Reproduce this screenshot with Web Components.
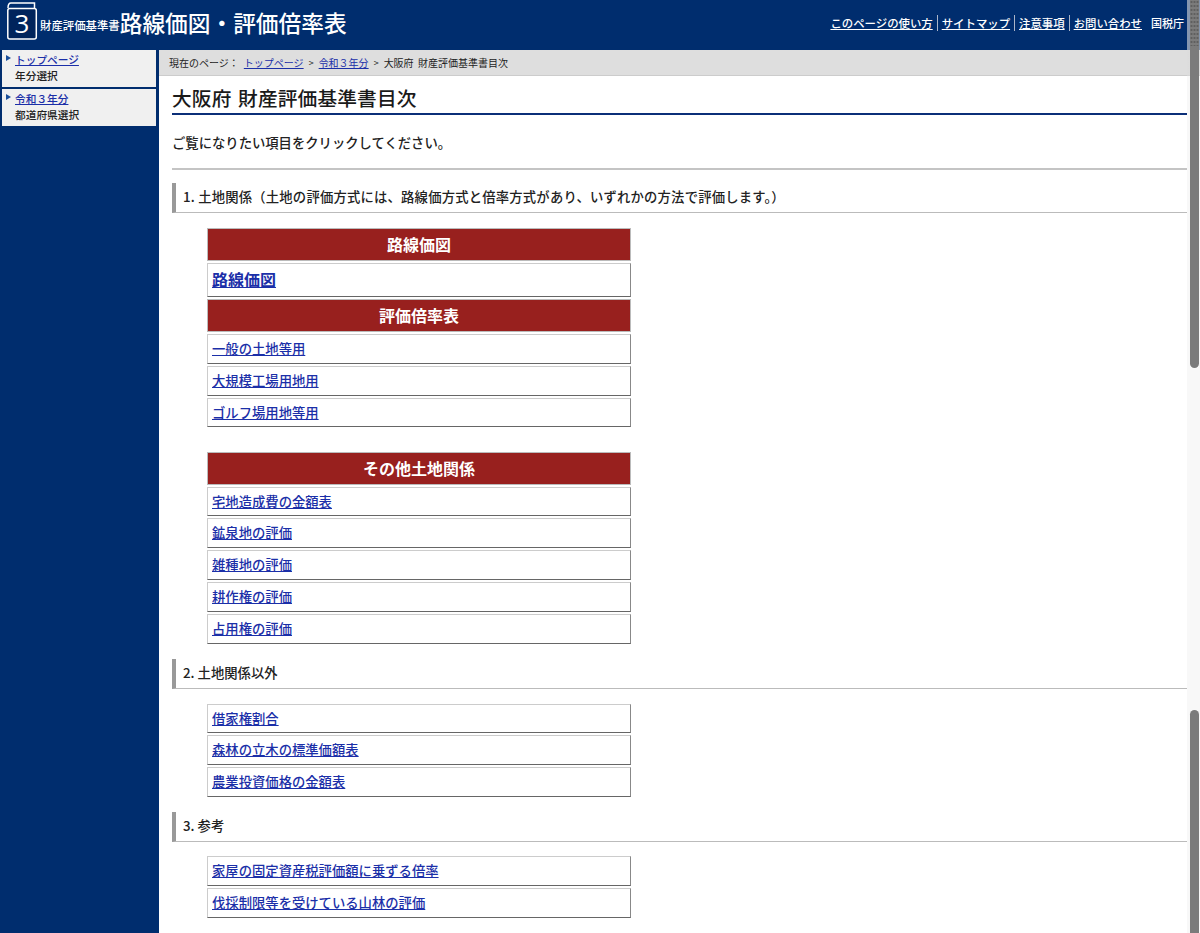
<!DOCTYPE html>
<html lang="ja"><head><meta charset="utf-8"><title>大阪府 財産評価基準書目次</title>
<style>
html,body{margin:0;padding:0;height:933px;overflow:hidden;background:#fff}
body{font-family:"Noto Sans CJK JP","Noto Sans",sans-serif;color:#222}
</style></head><body>
<app-page></app-page>
<script>
const FONT='"Noto Sans CJK JP","Liberation Sans",sans-serif';
function def(name,css,html){
  customElements.define(name,class extends HTMLElement{
    constructor(){super();const r=this.attachShadow({mode:'open'});r.innerHTML='<style>'+css+'</style>'+html;}
  });
}
def('site-header',`
:host{display:flex;align-items:flex-start;justify-content:space-between;height:50px;background:#002d6e;color:#fff;font-family:${FONT};box-sizing:border-box}
.l{display:flex;align-items:center;height:44px;padding-left:6px}
svg{display:block;margin-right:2px;flex:none}
.s{font-size:11.400px;font-weight:500;margin-top:5px;white-space:nowrap}
.t{font-size:22.700px;font-weight:500;white-space:nowrap}
nav{display:flex;align-items:center;font-size:11.400px;font-weight:500;height:16px;margin:15px 16px 0 0;white-space:nowrap}
a{color:#fff;padding:0 4px 0 4px;border-left:1px solid #aab4c8;line-height:16px}
a:first-child{border-left:0}
span{padding-left:5px;font-size:11px}
`,`<div class="l"><svg width="32" height="40" viewBox="0 0 32 40"><path d="M2 6Q2 1 5 1H28.500V6" fill="none" stroke="#fff" stroke-width="1.500"/><rect x="1.800" y="6.500" width="28.500" height="30.500" rx="2" fill="#00245c" stroke="#fff" stroke-width="1.500"/><text x="16" y="31" text-anchor="middle" font-family="Open Sans,Liberation Sans,sans-serif" font-size="26" font-weight="500" fill="#fff">3</text></svg><div class="s">財産評価基準書</div><div class="t">路線価図・評価倍率表</div></div>
<nav><a href="#">このページの使い方</a><a href="#">サイトマップ</a><a href="#">注意事項</a><a href="#">お問い合わせ</a><span>国税庁</span></nav>`);
def('side-item',`
:host{display:block;background:#f0f0f0;margin:0 3px 0 2px;box-sizing:border-box;height:37px;padding:2px 0 0 13px;font-size:10.700px;font-family:${FONT};line-height:16px;position:relative;color:#222;font-weight:500}
:host::before{content:"";position:absolute;left:4px;top:5px;border-left:5px solid #1a4f9a;border-top:3px solid transparent;border-bottom:3px solid transparent}
a{color:#1b2fa8;display:block}
`,`<a href="#"><slot name="link"></slot></a><div><slot></slot></div>`);
def('side-bar',`
:host{display:flex;flex-direction:column;gap:2px;width:159px;flex:none;background:#002d6e;box-sizing:border-box}
`,`<slot></slot>`);
def('bread-crumb',`
:host{display:flex;align-items:center;height:26px;background:#dedede;border-bottom:1px solid #ccc;box-sizing:border-box;padding-left:10px;font-size:10px;font-family:${FONT};color:#222;white-space:nowrap}
a{color:#1b2fa8;margin:0 4px}
b{font-weight:400;margin:0 1px;font-size:9px}
.h{margin-right:1px}
`,`<span class="h">現在のページ：</span><a href="#">トップページ</a><b>&gt;</b><a href="#">令和３年分</a><b>&gt;</b><span style="margin-left:4px">大阪府&nbsp;&nbsp;財産評価基準書目次</span>`);
def('page-title',`
:host{display:block;margin:10px 0 0 13px;height:27px;border-bottom:2px solid #0b2f78;font:500 19.700px/23px ${FONT};color:#1a1a1a;box-sizing:content-box;letter-spacing:.15px;word-spacing:2px;white-space:nowrap}
`,`<slot></slot>`);
def('sec-head',`
:host{display:block;margin-left:13px;height:30px;border-left:4px solid #999;border-bottom:1px solid #bbb;box-sizing:border-box;padding-left:7px;font:500 13.330px/28px ${FONT};color:#222;white-space:nowrap}
`,`<slot></slot>`);
def('link-table',`
:host{display:flex;flex-direction:column;width:424px;margin-left:48px;gap:2px;font-family:${FONT}}
`,`<slot></slot>`);
def('cell-head',`
:host{display:block;height:33px;background:#98201e;color:#fff;text-align:center;font:700 16px/31px ${FONT};border:1px solid #bbb;box-sizing:border-box}
`,`<slot></slot>`);
def('cell-link',`
:host{display:block;height:29.800px;border:1px solid;border-color:#ccc #888 #666 #ccc;box-sizing:border-box;padding-left:4px;font:500 13.330px/27px ${FONT};background:#fff}
:host([big]){height:34px;font-size:16px;line-height:31px;font-weight:700}
a{color:#1b2fa8}
`,`<a href="#"><slot></slot></a>`);
def('scroll-rail',`
:host{position:absolute;left:1187px;top:0;width:13px;height:933px;background:linear-gradient(#dcdcdc99 0,#dcdcdc99 76px,#f8f8f8 76px);box-sizing:border-box;z-index:5}
i{position:absolute;left:3px;width:9px;background:#7b7b7b;border-radius:4.500px}
.top{background:radial-gradient(circle,#5f5f5f 0 1px,transparent 1.200px) 0 0/3px 4px repeat,#7b7b7b;height:50px;top:-4px;border-radius:0}
`,`<i style="top:-4px;height:372px"></i><i class="top"></i><i style="top:710px;height:230px"></i>`);
def('app-page',`
:host{display:block;position:relative;width:1200px;height:933px;overflow:hidden;background:#fff}
.b{display:flex;height:883px}
main{flex:1;min-width:0;position:relative}
.intro{margin:18px 0 0 13px;height:24px;font:500 13.330px/20px ${FONT};color:#222}
hr{margin:11px 0 13px 13px;border:0;height:2px;background:#c4c4c4}
.m{height:15px}.n{height:15px}
.wide{letter-spacing:.2px}
`,`<site-header></site-header><div class="b"><side-bar>
<side-item><span slot="link">トップページ</span>年分選択</side-item>
<side-item><span slot="link">令和３年分</span>都道府県選択</side-item>
</side-bar><main><bread-crumb></bread-crumb>
<page-title>大阪府 財産評価基準書目次</page-title>
<div class="intro">ご覧になりたい項目をクリックしてください。</div><hr>
<sec-head><span class="wide">1. 土地関係（土地の評価方式には、路線価方式と倍率方式があり、いずれかの方法で評価します。）</span></sec-head>
<div class="m"></div>
<link-table><cell-head>路線価図</cell-head><cell-link big>路線価図</cell-link><cell-head>評価倍率表</cell-head><cell-link>一般の土地等用</cell-link><cell-link>大規模工場用地用</cell-link><cell-link>ゴルフ場用地等用</cell-link></link-table>
<div style="height:24.300px"></div>
<link-table><cell-head>その他土地関係</cell-head><cell-link>宅地造成費の金額表</cell-link><cell-link>鉱泉地の評価</cell-link><cell-link>雑種地の評価</cell-link><cell-link>耕作権の評価</cell-link><cell-link>占用権の評価</cell-link></link-table>
<div class="n"></div><sec-head>2. 土地関係以外</sec-head><div class="m"></div>
<link-table><cell-link>借家権割合</cell-link><cell-link>森林の立木の標準価額表</cell-link><cell-link>農業投資価格の金額表</cell-link></link-table>
<div class="n"></div><sec-head>3. 参考</sec-head><div style="height:14px"></div>
<link-table><cell-link>家屋の固定資産税評価額に乗ずる倍率</cell-link><cell-link>伐採制限等を受けている山林の評価</cell-link></link-table>
</main></div><scroll-rail></scroll-rail>`);
</script>
</body></html>
